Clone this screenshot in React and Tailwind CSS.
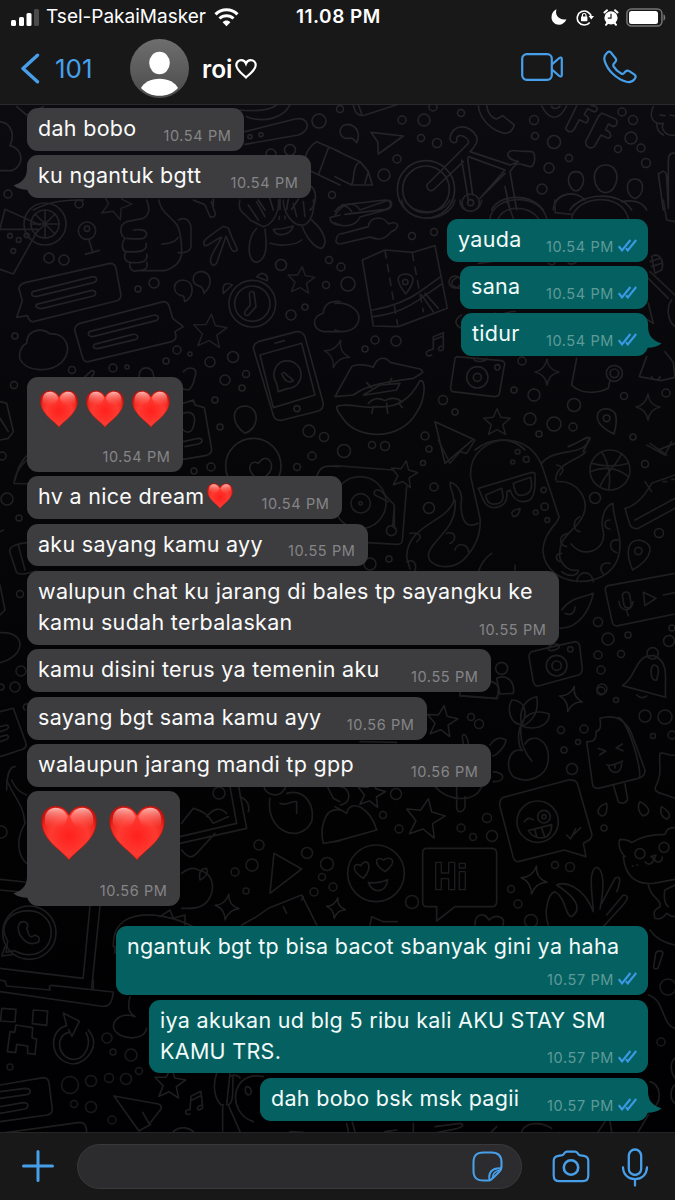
import React from "react";

const FONT = "font-['Inter','Liberation_Sans',sans-serif]";

/* ---------- wallpaper ---------- */

const DOTS = [
  // x, y, r in page pixels
  [319, 121, 7], [271, 154, 5], [290, 150, 5.5], [8, 194, 4], [79, 204, 4], [332, 195, 3.5],
  [340, 109, 3.5], [402, 120, 4], [424, 120, 6], [433, 107, 4], [461, 113, 3.5], [421, 138, 3.5], [437, 143, 4.5], [397, 159, 4], [384, 175, 6],
  [534, 120, 4.5], [535, 136, 3.5], [554, 142, 6.5], [569, 158, 3.5], [549, 168, 5], [542, 189, 5], [622, 112, 4], [633, 120, 4.5], [631, 138, 6], [618, 149, 3.5], [641, 148, 4], [646, 163, 4.5],
  [412, 236, 3.5], [434, 232, 3.5], [341, 267, 4], [348, 284, 7], [375, 340, 4], [365, 349, 3], [396, 341, 5], [455, 282, 6],
  [522, 361, 4], [514, 390, 3], [534, 395, 6], [443, 400, 4.5], [455, 412, 3], [530, 419, 6], [554, 424, 7], [573, 427, 4], [539, 434, 3], [574, 405, 6.5], [624, 396, 3.5], [666, 393, 4], [633, 437, 3],
  [344, 451, 6.5], [372, 445, 3.5], [385, 446, 4.5], [425, 436, 4], [429, 449, 3], [423, 463, 2.5], [434, 487, 4], [429, 508, 5.5], [645, 464, 3.5], [595, 498, 5.5], [659, 533, 4.5], [370, 564, 6], [389, 559, 3],
  [598, 622, 4.5], [608, 639, 6], [628, 635, 3], [598, 655, 4], [621, 654, 3.5], [601, 670, 4], [602, 689, 5], [669, 641, 5.5], [672, 628, 3],
  [49, 258, 5], [64, 260, 5], [138, 289, 3], [154, 283, 5], [281, 265, 5.5], [329, 260, 3.5], [326, 285, 3.5], [291, 315, 5], [305, 307, 3], [15, 336, 3], [72, 370, 3.5], [14, 385, 3.5], [113, 368, 4], [127, 367, 2], [177, 350, 4], [190, 354, 2], [166, 361, 3], [210, 362, 5], [233, 357, 5.5], [246, 374, 3.5], [225, 380, 5], [242, 388, 3], [215, 400, 3], [220, 427, 3], [309, 431, 6], [324, 437, 4.5], [312, 456, 4], [297, 467, 3.5], [194, 471, 3], [211, 467, 4], [2, 456, 4],
  [7, 499, 6], [19, 518, 3], [20, 594, 3.5], [21, 671, 5], [15, 687, 5], [1, 687, 3], [219, 793, 6], [1, 832, 6],
  [471, 717, 3.5], [479, 724, 4.5], [561, 730, 3.5], [584, 729, 4], [578, 742, 2.5], [564, 750, 3], [572, 769, 5.5], [645, 716, 6], [665, 717, 7], [653, 736, 2.5], [672, 735, 4], [616, 700, 2.5], [601, 691, 4], [604, 828, 3],
  [396, 794, 5.5], [383, 815, 3.5], [399, 829, 4], [487, 818, 4.5], [461, 828, 4], [473, 837, 3.5], [492, 836, 5.5], [555, 865, 3.5], [570, 867, 4.5], [511, 889, 3.5], [518, 904, 4], [412, 902, 6.5], [531, 921, 6.5],
  [259, 845, 5], [252, 865, 6], [235, 872, 4], [246, 891, 3], [307, 853, 5.5], [327, 864, 6.5], [322, 877, 3.5], [333, 887, 4], [314, 892, 4],
  [107, 1038, 5], [113, 1052, 3], [131, 1055, 6], [139, 1071, 3.5], [109, 1078, 4.5], [126, 1079, 5.5], [91, 1081, 5.5], [70, 1085, 8.5], [74, 1104, 3.5], [91, 1107, 5.5], [112, 1120, 4], [10, 1067, 3],
  [661, 1042, 4], [668, 987, 8],
];

function Star({ x, y, s = 1, r = 0 }) {
  return (
    <path
      vectorEffect="non-scaling-stroke"
      transform={`translate(${x} ${y}) rotate(${r}) scale(${s})`}
      d="M0-14 4-5 14-4 6 3 9 13 0 8-9 13-6 3-14-4-4-5Z"
    />
  );
}
function Spark({ x, y, s = 1, r = 0 }) {
  return (
    <path
      vectorEffect="non-scaling-stroke"
      transform={`translate(${x} ${y}) rotate(${r}) scale(${s})`}
      d="M0-13Q1-2 12 0 2 2 0 13-2 2-12 0-2-2 0-13Z"
    />
  );
}

function Wallpaper() {
  return (
    <svg className="absolute inset-0 h-full w-full" viewBox="0 0 675 1200" fill="none" aria-hidden="true">
      <defs>
        <linearGradient id="wp" x1="0" y1="0" x2="0" y2="1">
          <stop offset="0" stopColor="#0d0d12" />
          <stop offset=".35" stopColor="#07070a" />
          <stop offset=".7" stopColor="#020203" />
          <stop offset="1" stopColor="#000002" />
        </linearGradient>
        <linearGradient id="ln" gradientUnits="userSpaceOnUse" x1="0" y1="100" x2="0" y2="1140">
          <stop offset="0" stopColor="#262628" />
          <stop offset="1" stopColor="#18181a" />
        </linearGradient>
      </defs>
      <rect width="675" height="1200" fill="url(#wp)" />
      <g stroke="url(#ln)" strokeWidth="1.5" strokeLinejoin="round" strokeLinecap="round">
        {DOTS.map(([x, y, r], i) => (
          <circle key={i} cx={x} cy={y} r={r} />
        ))}
      </g>
      <g stroke="#202022" strokeWidth="1.500" strokeLinejoin="round">
        <Star x={301} y={280} s={0.95} r={5} />
        <Star x={210} y={331} s={1.2} r={5} />
        <Star x={497} y={422} s={0.95} />
        <Star x={404} y={474} s={0.95} r={10} />
        <Star x={442} y={721} s={1.1} r={8} />
        <Star x={425} y={818} s={1.4} r={10} />
        <Star x={371} y={793} s={1} r={10} />
        <Star x={170} y={1083} s={1.1} r={5} />
        <Star x={116} y={203} s={1.1} r={20} />
        <Spark x={547} y={372} />
        <Spark x={648} y={407} />
        <Spark x={337} y={354} s={1.1} r={15} />
        <Spark x={571} y={699} r={15} />
        <Spark x={534} y={880} s={1.1} r={10} />
        <Spark x={227} y={907} r={8} />
        <Spark x={336} y={908} s={0.8} r={10} />
      </g>
      <g stroke="#252527" strokeWidth="5" strokeLinejoin="round" strokeLinecap="round">
        {/* top left */}
        <g transform="scale(.3333)">
          <path d="M0 365c35 5 45 40 30 72 40 8 45 60 5 75H0M50 320l30 25 50-25M740 350c50 20 110 5 130-35M720 330c50 5 90 0 110-15M735 395l150-38c45-8 50 35 10 48l-160 28" />
          <path d="M950 425 1020 455M950 425c-30 20-45 55-25 85l95 45M985 445l-30 80M250 600c-40 0-95 0-150 30" />
          <circle cx="750" cy="410" r="6" /><circle cx="783" cy="404" r="6" />
          <path d="M640 598l0 20M935 560c20 20 10 60-5 70M775 600l20 30M810 596l10 34M840 598v30M865 598l-5 30M895 598l-20 30" />
        </g>
        {/* top right: pencil, plane, bicycle, phone, OFF, people */}
        <g transform="translate(335 0) scale(.3333)">
          <path d="M55 315c5 25 15 35 35 30l110-35M70 315l10 25M0 450l75 35 25 30 12 40-62 0-50-25M75 485c-25 15-15 50-25 70M100 515l-10 35M40 415c-30 5-35-40-3-42 30 2 40 30 28 55-10-10-10-15-25-13Z" />
          <path d="M108 397 205 408 130 462 128 425Z" />
          <circle cx="273" cy="568" r="86" /><circle cx="273" cy="568" r="70" />
          <path d="M275 555 400 430c5-15-30-35-35-15 5 20-20 15-20 0 5-45 60-45 80-5 5 12 0 25-20 45l120 40 25-10c-45-10-40-40 0-32l40 2c12 2 12 35 0 45-20 0-35-15-50-5l-15 20 20 115M380 480l20 120M400 470l110 40-75 85M398 475l15 110M275 555c0 15 10 20 20 15l90-85M510 560l15 70M440 590l70-70" />
          <circle cx="407" cy="608" r="26" /><circle cx="407" cy="608" r="9" />
          <path d="M470 630c20-45 110-55 155 0" />
          <path d="M430 318c5 40 40 75 80 82 20 0 25-15 28-25l-35-28c-10 5-15 10-20 10-15-5-25-20-28-40" />
          <path d="M620 318c20 40 50 50 75 0M650 318c0 10 20 10 25 0" />
          <path d="M725 318 692 385c8 15 20 12 26 2l15-28 20 10c12-10 8-20-5-25l10-18 20 10c15-5 10-20-10-20" />
          <path d="M790 350 752 425c0 18 20 25 28 12l18-32 22 10c12-5 8-20-8-25l8-18 15 8c15-5 15-22 0-26l-35-15Z" />
          <path d="M955 320c-15 30 0 55 30 50-10 20 10 40 35 35M965 370c0 20 10 30 20 35M975 345l15 2M1005 345l15 3" />
          <path d="M723 515c-35 0-25 55 0 58 25-3 35-58 0-58ZM812 495c-50 0-40 80 0 83 40-3 50-83 0-83ZM900 537c-35 0-25 55 0 58 25-3 35-58 0-58Z" />
          <path d="M655 630c5-55 70-60 95-30M705 630c30-50 150-60 185 0M860 605c40-8 65 5 75 25M1020 460c-20-5-20 15-20 30v130M975 520c10-12 20-5 20 10l5 95M970 520l15 110M20 615l130-15c25 0 20 25 0 28l-120 15M0 635c20-30 40-15 50 0" />
        </g>
        {/* right, upper middle: sliders, map, lips, camera, mug, bell */}
        <g transform="translate(335 200) scale(.3333)" stroke="#222224">
          <path d="M0 45c25-40 60-40 75-15l80-28c20-5 20 20 0 27l-80 22C60 85 15 80 0 68M5 115c0-10 10-15 20-15l75-20c5-35 50-30 60-8 25-10 40 5 15 20-15 5-15 25-45 25-15 0-20-8-30-5l-85 20c-10 0-15-8-10-17Z" />
          <path d="M200 0c10 70 140 75 160 0M210 0c20 45 110 50 135 0M375 0c0 45 60 45 65 0M465 55c10-70 150-80 170 0M490 55c20-40 90-40 120 0M515 0l20 55M660 0c-5 20 5 30 0 38l50 5M710 55c15-70 150-80 170 0M985 0l10 60 25 5" />
          <path d="M82 180 150 150 235 157 300 137 337 325 190 380 115 378ZM112 330c60-10 110-30 150-60l55-40M115 350c70-10 110-30 150-60l55-38M260 285l35 50M270 280l40 45" /><path strokeDasharray="22 20" d="M150 152 188 375M232 160 265 335" />
          <path d="M212 282c-30-40-30-58 0-60 30 2 28 25 0 60Z" /><circle cx="211" cy="246" r="8" />
          <path d="M0 310c45-5 80 25 70 55-10 30-50 35-70 25M290 465c-15 10-25-10-5-15l10-3V410l30-12v50c-15 12-22-5-5-10M295 420l30-12" />
          <path d="M0 590 50 500c15-10 50-5 65 2 10-30 35-35 50-15l90 20c15 10 10 10-20 28-80 10-140 20-180 50ZM5 620c30-15 90 10 120 0 60 5 100-20 130-78 20-5 15 60-10 95-50 90-180 80-220 20-15-20-20-25-20-37Z" />
          <path d="M85 585l50-30 60-5-10 20-95 15ZM100 610c20-20 35-15 50-8 15-10 40-10 50 5M115 620l-5 20M155 610l3 30M190 608l12 15M95 548l15 15M170 535l-8 15" />
          <path d="M365 470 500 482c8 2 12 10 8 15l-15 85c-3 8-10 8-15 8l-125-15c-8-5-8-10-5-20l12-80Z" /><circle cx="427" cy="532" r="32" /><circle cx="427" cy="532" r="12" /><circle cx="487" cy="502" r="8" />
          <path d="M415 475c5 15 40 10 40 0M725 475 710 555c30 30 80 25 110 10l5-25" /><circle cx="838" cy="520" r="24" /><circle cx="838" cy="520" r="13" />
          <path d="M935 470l-22 60 65 12 42-10-5-45-25-32M950 530c5 15 25 10 25 0M430 190l40-5M640 190c15 10 20 0 20-5M700 190c10 5 20 0 25-5M370 230c-30 15-25 30 5 35M380 345c-20 10-25 30 0 40M480 340c20 10 50-10 60-5M950 170c20-15 40 10 30 40l-20 10ZM945 185l30-10M950 200l30-10M945 215l75 70M940 235l60 60M1010 300c-15 20-15 60 10 80M940 310l5 20 10 40-25-15" />
          <path d="M787 650c0-30 45-30 55-5 5 20 0 40-5 57-30-15-50-30-50-52Z" /><circle cx="815" cy="655" r="10" />
          <path d="M300 665 415 718 330 790ZM420 750c50-40 110-40 150 0M700 740c40-15 55-35 65-25-5 15-15 25-20 40M1020 730l-50 20" />
        </g>
        {/* left, upper middle: drink, thumb, monkey, chat boxes, clock, phone */}
        <g transform="translate(0 200) scale(.3333)" stroke="#222224">
          <path d="M0 85 15 28 120 75M0 88h115L40 222 0 208" /><circle cx="135" cy="72" r="63" /><circle cx="135" cy="72" r="42" />
          <path d="M135 30v84M93 72h84M105 42l60 60M165 42l-60 60" /><circle cx="30" cy="107" r="7" /><circle cx="56" cy="120" r="7" /><circle cx="80" cy="106" r="7" /><circle cx="40" cy="153" r="7" />
          <circle cx="261" cy="92" r="26" /><circle cx="261" cy="86" r="8" /><path d="M267 120l12 38M256 163l42-12" />
          <path d="M440 0c15 35 0 50-10 55l-50 10c-25 10-20 40-5 50-12 15-10 35 3 42-10 15 0 30 12 30-5 20 10 30 20 25h85c20-5 45-20 50-50 0-45-5-80-20-95-30-30-45-40-48-67M380 115c50 5 60 0 60-15-5-12-20-12-40-10M378 155c50 3 65-5 60-25M390 187c40 5 55-5 50-25M410 212c30 0 35-10 30-25M485 132c20 0 40-5 50-20M535 60c25-12 35 5 38 20v60c-2 15-20 20-38 18" />
          <path d="M580 0c20 10 30 10 35 15l15 35c15 5 20-5 12-20l-8-25M635 192c-10-15 0-25 30-80-20 5-35 25-50 25-12-12 0-20 55-58l15 5c20 60 40 70 15 70-12-10-15-35-22-45l-28 80c-5 10-12 8-15 3Z" />
          <path d="M720 0c-10 40 20 40 30 60l40 20c30-5 50-50 45-80M745 15l30 45M770 5l25 45M850 0c0 40 30 80 60 75 25-5 35-50 30-75M880 10l10 40M910 5l5 45M770 85c-30 30-30 100 0 102 35-10 30-60 25-100M905 75c15 40 40 70 60 70 20-15 10-50-30-85M810 130c30 10 80 5 95-10M820 88c10 25 50 20 60-10-15 5-40 10-60 10ZM838 50v8M855 48v8M1020 45l-30 8c0 15 20 25 30 20" />
          <path d="M75 248 330 190c12 0 15 5 18 15l15 80c0 10-5 15-15 18L100 365c-8 2-15-10-18-18l-32 5 17-50-10-35c0-10 5-15 18-19ZM98 275l180-45c15 0 15 12 5 17l-175 43c-15 0-15-10-10-15ZM110 313l165-42c15 0 15 12 5 17l-155 38c-15 0-20-8-15-13Z" />
          <path d="M240 370 490 305c10 0 15 5 18 15l10 35 32 25-25 15c5 15 5 25-10 30L265 485c-10 2-15-5-18-15l-23-80c0-10 5-15 16-20ZM268 395l195-50c15 0 15 12 5 17l-190 48c-15 0-15-10-10-15ZM283 433l115-30c15-2 20 10 10 15l-115 28c-15 0-15-8-10-13Z" />
          <path d="M555 305c-5-12 0-10-5-17-35-5-35-45-3-48 35 0 40 45 8 65ZM612 280c0-15-5-15-10-20-35-10-25-45 3-46 30 5 35 40 7 66Z" />
          <circle cx="757" cy="311" r="70" /><circle cx="757" cy="311" r="53" /><path d="M748 280c5-8 15-8 15 5l5 35-22 25c-10 5-15-5-10-12l15-18ZM670 280c-5-35 15-32 27-25ZM770 230c15-18 35-8 32 12Z" />
          <path d="M80 430c0-40 45-50 70-28 50-5 70 50 35 85-40 35-110 25-125-10-5-20 5-40 20-47ZM255 530l20-18c10 0 10 10 0 17M418 530c-5-35 45-35 43 0M550 515c20-20 45-10 35 15-5 25-10 35-20 40l-25-5M1020 305c-35-5-50 15-50 35-35 10-35 45 0 55h50" />
          <path d="M775 425 890 395c15-2 20 5 25 15l55 200c0 15-5 20-15 23l-110 28c-15 2-22-5-25-15L760 445c0-10 5-15 15-20ZM780 465l125-35 40 155-125 38ZM825 430l28-8" /><circle cx="891" cy="626" r="9" /><path d="M835 575l-5-25c-20-30 0-68 32-68 55 5 55 80 0 84ZM845 520c10 25 20 30 35 22l-10-10c-10 0-10-15-20-15" />
          <path d="M735 618c-40 0-45 50 0 82 45-15 45-80 0-82ZM550 610l30-10 5 15 28 8 22 125c0 10-5 15-15 18l-70 12M550 640c30-10 40 10 30 40-5 20-20 20-30 10M550 725l45-10c15 0 15 12 0 17l-40 8M0 605l20 5 20 85-15 20-25 5M0 655l25 40" />
          <circle cx="760" cy="798" r="83" /><path d="M780 840c-45-20-35-65-5-50 25-35 50 0 35 25-5 10-20 20-30 25ZM45 840l10-35c10-20 20-35 30-40M950 830c10-30 20-35 70-30" />
        </g>
        {/* right middle: record player, octopus, ball, trainer, voice note, camera, bell */}
        <g transform="translate(335 440) scale(.3333)" stroke="#1e1e21">
          <path d="M0 77 175 90M215 140 202 300c0 10-5 13-15 13l-90-5" /><circle cx="75" cy="188" r="78" /><circle cx="77" cy="190" r="29" /><circle cx="77" cy="190" r="5" />
          <path d="M160 185 120 165c-10-15 10-20 20-10l38 40-5 65M178 195v70" /><circle cx="169" cy="272" r="15" />
          <path d="M310 0 345 70 375 35 395 40 420 0M435 235 407 110c-5-70 50-110 110-110 60 5 90 40 105 80l50 150c0 20-48 45-48 105 10 110 190 120 225 20 20-60-15-110-15-165-20 5-40 40-30 80 15 60-60 90-95 42M430 250c-50 25-55-40-50-75 0-20-15-45-35-48 0 30 15 30 10 60-25 60-140 70-140 165l10 35M435 235c5 60-25 100-50 125-40 35-105 20-105-15 5-45 90-75 80-165M620 70c40-50 130-20 140-70M662 120c0-50 70-60 90-85M665 125c60-5 100 50 80 100-20 50-80 60-70 130 10 25 30 40 50 35" />
          <path d="M430 145 590 97 600 100c2 40 0 75-20 82-30 10-45-5-55-32l-10 5c5 30-10 45-35 48-35 0-35-30-50-58ZM452 165c5 30 20 30 40 25 20-10 10-30 8-45ZM535 130c5 40 20 40 40 32 20-10 15-35 12-50Z" />
          <circle cx="548" cy="35" r="7" /><circle cx="574" cy="58" r="9" /><circle cx="533" cy="66" r="6" /><circle cx="626" cy="150" r="8" /><circle cx="629" cy="200" r="11" /><circle cx="602" cy="217" r="7" /><circle cx="637" cy="240" r="7" />
          <path d="M530 220c5-15 20-10 25-15 0 15-10 25-20 25ZM335 280c30-10 30 25 10 30M360 330c5-25 40-20 42 10M225 280c30-5 40 10 20 25M215 365c25-10 30 10 25 28M735 230c-25 10-20 45 0 45M700 280c-30 5-30 35-5 40M680 340c-20 0-20 20-5 25M850 300c-30-5-30 30-5 38M825 370c-25-5-35 15-20 32M775 425c-5-35-45-35-50 0M825 240c-20 0-20 25 0 27M665 75c20 5 25 15 10 30M430 395c10-30 25-45 40-55M540 395v-20M680 395c25 20 50 10 50-5M680 510c30-40 60-35 95-50-10 45-40 105-100 105M690 520c20 10 30-5 30-20" />
          <circle cx="825" cy="90" r="60" /><path d="M770 70c40 10 80 10 110 0M765 95c40-15 80-15 115 15M800 35c20 30 30 80 20 115M860 40c-10 30-50 60-65 100" />
          <path d="M935 15l55 30 20-40M945 10l50 35M870 205c20-5 50-20 80-75l70-25M870 205l15 50c5 10 15 12 25 10l110-60M900 240l120-65M930 125l20 30M985 125h10M1010 118h8" />
          <path d="M893 390c-20-45-20-90 20-90 50 10 40 55-20 90Z" /><circle cx="910" cy="333" r="11" />
          <path d="M1020 400 820 437c-8 2-10 10-8 18l20 92c2 8 10 12 18 10l170-35M925 457l38 18-33 22ZM985 465l35-7M862 465c5-12 20-12 22 0l5 30c-2 12-18 12-22 0ZM852 485c5 35 40 30 42 0M875 512l5 15" />
          <path d="M590 635 720 605c8 0 12 5 14 12l8 70c0 10-3 15-12 18L610 738c-8 2-12-5-15-12l-13-75c0-8 3-13 8-16ZM640 628c-5-15 30-22 33-10 0 12-30 18-33 10Z" /><circle cx="665" cy="677" r="31" /><circle cx="665" cy="677" r="14" /><circle cx="706" cy="628" r="8" />
          <path d="M862 737c45-25 35-95 95-90 50 20 30 80 35 125ZM955 675c15 0 20 10 10 45-20 5-20-35-10-45ZM905 765c15 15 25 5 30 3" /><circle cx="953" cy="640" r="17" />
          <circle cx="500" cy="685" r="18" /><path d="M485 715c35-15 55 15 50 45l-40 2ZM470 725c30 10 20 35 15 50l-110-8" />
        </g>
        {/* left edge */}
        <g transform="translate(0 460) scale(.3333)" stroke="#1e1e21">
          <path d="M42 70c50 5 110-5 150-20M42 70C45 30 70 10 80 0M80 248c-40 5-55 15-50 30l20 60c10 8 30 3 60-5M55 255l20 75M0 375l15 75-15 15M0 518c80-5 80 70 0 90M0 755l40-10 38 105c2 10-3 15-10 18L0 890M0 800l20-5c10 5 5 12-5 15l-15 5M0 830l20-5c10 5 5 12-5 15l-15 5M45 920c-20 0-25 40-25 70M90 735c-20-10-25 10-15 15M0 215l10-5" />
        </g>
        {/* lower left: picture, apple, laptop */}
        <g transform="translate(0 780) scale(.3333)" stroke="#1d1d1f">
          <path d="M20 0c20 50 50 70 55 130-30 50-20 100 5 120M35 0c10 25 30 40 45 45M0 298l75 8M0 330l80 8M300 378 275 625M270 378 250 590M0 565l250 30M0 600l15 3 5 15 130 12M150 630c-3-12-3-12 5-14l185 20" />
          <circle cx="88" cy="458" r="80" /><path d="M88 392c90 5 85 130 0 132-20 0-30-5-45-12l-25 5 5-35c-30-45 5-90 65-90ZM70 425c-15 0-20 20-10 40 15 25 35 30 55 22 5-12 5-15-10-22-12 10-15 5-20-5l-5-15c10-15-5-20-10-20ZM15 500l-10 28 35-5" />
          <path d="M540 170 710 130 690 20M540 190 740 145 715 15M545 130l35-45c50 15 50 35 60 45l45-20M620 110c20-25 40-30 60-10M545 210c20 25 30 25 45 10l55-60M720 50c25 10 30 30 25 45" />
          <path d="M545 280c20-15 35-20 50-10 50 10 50 60 30 90-20 30-60 25-80 25M600 300c-5-25 5-35 20-35 5 15 0 25-20 35Z" />
          <path d="M800 0c-30 40 40 60 50 30 10 0 5-20-5-25M810 55c-15 100 90 140 125 70 10-50-20-100-75-85M840 70c20 10 40-10 50-5v35M1020 90c-50-10-60 60-50 100l50-8M980 15l20 40 20 10M822 220 905 267 810 340ZM725 435l45-25 35-25 100-40 45 90M850 380l10 20M910 350l-5 10M340 500c-5-120 140-110 240-60M480 410l30-20 10 25 35-10v30M345 500v20" />
        </g>
        {/* lower right: plant, ice pop, speech boxes, cat, hand */}
        <g transform="translate(335 690) scale(.3333)" stroke="#1d1d1f">
          <path d="M530 30c40 0 50 40 30 75-35-5-45-45-30-75ZM605 20c10 50-20 80-45 88-10-50 10-80 45-88ZM643 72c0 40-50 50-85 35 10-35 45-50 85-35ZM558 108c-5 50 10 80 33 105M555 112c-10 35 0 65 8 70-45-15-55 60-25 80 40 20 100 0 102-55 5-60-50-80-70-45" />
          <path d="M795 85c50-15 85 10 100 60l35 95c0 15-5 20-20 25l-120 30c-8 0-15-3-17-10L755 155c20 0 30-5 28-30 15-5 15-15 12-40ZM850 83c30 5 75 170 62 180M835 285l15 50c8 8 25 5 28-8l-8-45M790 175l22 8-18 12M862 162l-18 12 20 8M815 225c15 5 30-5 48-12M820 225c5 30 40 30 40-5M838 222l3 12" />
          <path d="M800 378c-20-10-10-30 15-38 3 25-3 38-15 38ZM925 378c-20-15-15-35-10-43 30 15 35 35 10 43ZM995 388c-20-10-20-25-15-38 25 15 30 30 15 38ZM1020 195c-20 5-30-10-45-5-5 40 10 55-15 105 0 15 25 15 60 30" />
          <path d="M505 322 700 270c15-2 22 0 27 10l43 150c3 15-5 20-25 30l8 40-65-20L550 515c-10 0-12-5-15-12L495 350c-3-15 0-22 10-28Z" /><circle cx="608" cy="395" r="62" /><circle cx="627" cy="380" r="19" /><circle cx="627" cy="380" r="6" />
          <path d="M568 395c10-12 15-12 27-5M580 422l70-18c0 50-50 50-70 18ZM600 420l5 20M620 415l8 22M695 435l12 12 15-30M715 435l22-22" />
          <circle cx="123" cy="550" r="85" /><path d="M85 565c-40-25-30-50-8-38 20-30 40 5 8 38ZM150 545c-40-25-25-50-5-35 25-15 45 5 5 35ZM100 577c25 5 40 0 58-8-5 45-50 40-58 8Z" />
          <path d="M275 475h195c10 0 15 5 15 15v145c0 10-5 15-15 15H360l-55 43v-43h-30c-8 0-12-5-12-15V490c0-10 5-15 12-15Z" />
          <path strokeWidth="4" d="M302 517h17v32h22v-32h18v82h-18v-33h-22v33h-17ZM373 545h18v54h-18ZM373 520h18v14h-18Z" />
          <path d="M870 500c-20-20-20-45-15-52 15 0 30 5 35 10 30-20 60-25 100-25 5-20 20-20 30-20M865 500c5 50 30 85 90 80l65-12M940 585c10 45 40 40 35 65-20 10-20 20-15 35 15 5 30-5 35-15 12 10 25 10 25 10M1000 650c-10-5-15-30-10-50l30-15" /><circle cx="915" cy="491" r="15" /><circle cx="987" cy="472" r="15" /><path d="M948 500l15-5-5 12ZM930 515c10 15 25 5 27-8 8 15 25 10 25-5M892 528h3M905 525h3" />
          <path d="M640 705c-15-40 0-95 20-100 35 20 30 75 50 75 35-25 10-60-45-95 20-10 80 0 110 80M775 660c-5-60-15-120 10-128 20 5 25 50 10 125M800 640l40-75c25-15 10 30 5 40M815 675l50-60c25 0 5 25-10 40l-50 55M420 705c0-40 30-35 42-15 20-20 50-10 42 15M105 705l5-25 35 15 42 0" />
          <path d="M385 160c-10-40 10-30 15 0M465 165c20-30 40-20 48-15 0 15-25 45-40 48M475 245c40 5 35 30 0 30M300 290c40 45 120 50 140 0M365 290v60c0 20 20 20 25 0V320M0 350l35 20c10-45 70-20 90 50L0 455M15 290c30 0 40 50 0 55M75 155l110 2M375 0l0 18 112 8 3-25" />
        </g>
        {/* bottom left */}
        <g transform="translate(0 980) scale(.3333)" stroke="#1d1d1f">
          <path d="M0 35l300 43c25 5 35-5 40-40M280 0v28M5 85l43 3-3 38-43-3ZM100 90l43 3-3 43-43-5ZM48 135l50 8-2 30 14 5-5 45-22-3v-22l-33-5-3 25-25-3 8-60 14 2ZM265 150c40 45-5 100-45 102-70-5-80-100-20-115l-10-38 48 25-22 45-10-20M258 158c20 35-5 80-35 80-50 0-60-70-18-80" />
          <path d="M0 315 130 293c10 0 15 5 17 15l10 80c0 10-5 15-15 17L0 425M0 335l75-10c20 0 20 15 5 19L0 355M0 380l70-12c20 0 15 15 5 19L0 400M0 460l240-33c15 0 20 10 20 30M390 50c-10 40 0 50 15 60-50-20-90 30-45 55 30 15 75 10 80-20" />
          <path d="M342 348 475 372c10 3 10 8 8 15l-35 45-20-35M342 348l75 105 35-20M570 402c-20 5-15-15 0-13l3-40 30-15 5 50c-20 15-20-5-5-8M572 362l30-15M650 280c-20 60 10 100 20 95M690 280l-10 95M700 285c-5 40 5 80-15 90l35 80M668 378v75M790 290c-100-20-110 110-30 135M740 320c15 0 20 25 5 25-12-5-10-25-5-25ZM520 455c20-20 50-10 60 0M870 455l40 2M690 290c15-10 30 0 30 5" />
        </g>
        {/* bottom right */}
        <g transform="translate(335 980) scale(.3333)" stroke="#1d1d1f">
          <path d="M940 45c50 15 40 90 80 100M1020 235c-15 10-15 40 0 60M1020 370c-20-15-10-50 0-55M945 305c35 10 35 60 10 80M40 455l-5-25M60 455l-8-28M150 455l35-5M235 430v25M300 440l75-10c20 5 0 15-20 18l-50 10M560 455c10-30 60-30 90-10M790 455l20-30M830 455l-5-30M910 455l30-50M470 455l15-15M962-80c5-10 20-10 22 0l-15 45c-12 3-15 0-12-10ZM945-150c20 30 50 40 75 45" />
        </g>
      </g>
    </svg>
  );
}

/* ---------- icons ---------- */

function Heart({ className }) {
  return (
    <svg className={className} viewBox="0 0 38 38" role="img" aria-label="❤️">
      <defs>
        <radialGradient id="hg" gradientUnits="userSpaceOnUse" cx="19" cy="21" r="21">
          <stop offset="0" stopColor="#ff201c" />
          <stop offset=".6" stopColor="#fd3a31" />
          <stop offset=".85" stopColor="#f0281f" />
          <stop offset="1" stopColor="#cf140f" />
        </radialGradient>
        <linearGradient id="hs" x1="0" y1="0" x2="0" y2="1">
          <stop offset="0" stopColor="#ffc9c2" stopOpacity=".9" />
          <stop offset="1" stopColor="#ff6055" stopOpacity="0" />
        </linearGradient>
      </defs>
      <path
        d="M19 37.500C15.500 31.500 1 25 .4 11.500 .2 5 4.500 .8 10 .8c4 0 7 2.200 9 6 2-3.800 5-6 9-6 5.500 0 9.800 4.200 9.600 10.700C37 25 22.500 31.500 19 37.500Z"
        fill="url(#hg)" stroke="#a51812" strokeWidth=".5"
      />
      <path d="M2.500 12C2 5 5.500 1.800 10 1.800c4 0 6.500 2.500 8 6-1 5-4 8-8 8-4 0-7-1.300-7.500-3.800Z" fill="url(#hs)" />
      <path d="M35.500 12C36 5 32.500 1.800 28 1.800c-4 0-6.500 2.500-8 6 1 5 4 8 8 8 4 0 7-1.300 7.500-3.800Z" fill="url(#hs)" />
    </svg>
  );
}

function Ticks() {
  return (
    <svg className="mb-[2px] ml-1 h-[13px] w-[19px] shrink-0" viewBox="0 0 19 13" fill="none" stroke="#3b99e6" strokeWidth="2.100">
      <path d="M.8 7.200 4 11.400 12.400 1M8 9.300 9.800 11.400 18.200 1" />
    </svg>
  );
}

function StatusBar() {
  return (
    <div className="grid h-[34px] grid-cols-[1fr_auto_1fr] items-center pl-[11px] pr-[9px] text-white">
      <div className="flex items-center">
        <svg className="h-[17px] w-[28px]" viewBox="0 0 28 17">
          <rect x="0" y="11" width="5" height="6" rx="1.500" fill="#fff" />
          <rect x="8" y="8" width="5" height="9" rx="1.500" fill="#fff" />
          <rect x="15.500" y="4" width="5" height="13" rx="1.500" fill="#fff" />
          <rect x="23" y="0" width="5" height="17" rx="1.500" fill="#4a4a4b" />
        </svg>
        <span className="ml-[7px] w-[161px] whitespace-nowrap text-[19px] leading-6">Tsel-PakaiMasker</span>
        <svg className="ml-[7px] h-[19px] w-[25px]" viewBox="0 0 25 19" fill="none" stroke="#fff">
          <path d="M1.500 6.300C7.800.2 17.200.2 23.500 6.300" strokeWidth="3.200" />
          <path d="M5.500 10.500c4-3.800 10-3.800 14 0" strokeWidth="3" />
          <path d="m12.500 18.200-3.900-4c2-2.200 5.800-2.200 7.800 0Z" fill="#fff" stroke="none" />
        </svg>
      </div>
      <span className="w-[85px] whitespace-nowrap text-[19px] font-semibold leading-6 tracking-[0.5px]">11.08 PM</span>
      <div className="flex items-center justify-end">
        <svg className="h-4 w-4" viewBox="0 0 16 16" fill="#fff">
          <path d="M5.500.3c-2 6 2.500 11.200 10 9.900C13.800 13.800 11 15.700 8 15.700 3.800 15.700.5 12.400.5 8.200.5 4.600 2.500 1.500 5.500.3Z" />
        </svg>
        <svg className="ml-[9px] h-[17px] w-[18px]" viewBox="0 0 18 17" fill="none" stroke="#fff" strokeWidth="1.600">
          <path d="M13.700 13.500A7 7 0 1 1 15.200 8" />
          <path d="m12.600 7 2.700 3.600L18 7Z" fill="#fff" stroke="none" />
          <rect x="5" y="7.500" width="6.400" height="4.700" rx=".6" fill="#fff" stroke="none" />
          <path d="M6.400 8V6.300a1.800 1.800 0 0 1 3.600 0V8" strokeWidth="1.200" />
        </svg>
        <svg className="ml-[9px] h-[17px] w-[16px]" viewBox="0 0 16 17">
          <g stroke="#fff" strokeWidth="2" strokeLinecap="round">
            <path d="M1.500 3.500 4 1.300M14.500 3.500 12 1.300M3 15.800l1.500-2M13 15.800l-1.500-2" />
          </g>
          <circle cx="8" cy="8.800" r="6.600" fill="#fff" />
          <path d="M8 4.800v4.300H4.800" fill="none" stroke="#181818" strokeWidth="1.200" />
        </svg>
        <svg className="ml-[7px] h-[19px] w-[40px]" viewBox="0 0 40 19">
          <rect x=".9" y=".9" width="35" height="17.200" rx="4.500" fill="none" stroke="#747475" strokeWidth="1.500" />
          <rect x="3" y="3" width="29" height="13" rx="2.500" fill="#fff" />
          <path d="M37.500 6.200c2.400 1 2.400 5.600 0 6.600Z" fill="#747475" />
        </svg>
      </div>
    </div>
  );
}

function Header() {
  return (
    <header className="relative h-[105px] border-b border-[#2a2a2c] bg-[#181818]">
      <StatusBar />
      <div className="flex h-[69px] items-center pl-[21px] pr-[38px]">
        <svg className="h-[31px] w-[19px]" viewBox="0 0 19 31" fill="none" stroke="#479fea" strokeWidth="3.400" strokeLinecap="round" strokeLinejoin="round">
          <path d="M16.500 2.200 2 15.500l14.500 13.300" />
        </svg>
        <span className="ml-[15px] w-[41px] whitespace-nowrap text-[26px] leading-8 text-[#479fea]">101</span>
        <svg className="ml-[34px] h-[59px] w-[59px]" viewBox="0 0 59 59">
          <defs>
            <linearGradient id="av" x1="0" y1="0" x2="0" y2="1">
              <stop offset="0" stopColor="#6e6e6f" />
              <stop offset="1" stopColor="#4b4b4c" />
            </linearGradient>
          </defs>
          <circle cx="29.500" cy="29.500" r="29.500" fill="url(#av)" />
          <ellipse cx="29.500" cy="24" rx="10.300" ry="11.300" fill="#fff" />
          <path d="M11 49c3-5.500 9.500-9.300 18.500-9.300S45 43.500 48 49c-4.500 5-11 7.800-18.500 7.800S15.500 54 11 49Z" fill="#fff" />
        </svg>
        <h1 className="ml-[13px] flex items-center text-[24.500px] font-semibold leading-8 text-white">
          roi
          <svg className="ml-[2px] h-[20px] w-[22px]" viewBox="0 0 22 20" fill="none" stroke="#fff" strokeWidth="2.200" role="img" aria-label="♡">
            <path d="M11 18.500C8 15.500 1.300 11 1.300 6.300 1.300 3.300 3.500 1.200 6.200 1.200c2.200 0 4 1.300 4.800 3.400.8-2.100 2.600-3.400 4.800-3.400 2.700 0 4.900 2.100 4.900 5.100 0 4.700-6.700 9.200-9.700 12.200Z" />
          </svg>
        </h1>
        <svg className="ml-auto mt-[-3px] h-[28px] w-[42px]" viewBox="0 0 42 28" fill="none" stroke="#479fea" strokeWidth="2.200" strokeLinejoin="round">
          <rect x="1.200" y="1.200" width="29.600" height="25.600" rx="4.500" />
          <path d="m31 11.300 7.300-6.300c1.300-1 2.500-.4 2.500 1v16c0 1.400-1.200 2-2.500 1L31 16.700" />
        </svg>
        <svg className="ml-[40px] mt-[-3px] h-[34px] w-[34px]" viewBox="0 0 34 34" fill="none" stroke="#479fea" strokeWidth="2.200" strokeLinejoin="round">
          <path d="M3.600 3.200C5 1.600 6.600 1 7.800 2.400l4.700 5.900c1 1.300.8 2.600-.3 3.800l-1.400 1.700c-.8 1-.7 1.700-.1 2.800 1.800 3 4.500 5.200 7.500 6.900 1.100.6 1.900.5 2.700-.3l1.500-1.600c1.200-1.200 2.600-1.400 3.900-.4l5.200 3.500c1.600 1.200 1.300 2.700.2 4.200-2 2.800-5 3.800-8.300 2.900C13 28.800 4.700 20.300 1.800 11.300.7 8 1.400 5.300 3.600 3.200Z" />
        </svg>
      </div>
    </header>
  );
}

/* ---------- messages ---------- */

function Bubble({ out, tail, time, lines, size, children }) {
  return (
    <div
      className={`relative shrink-0 rounded-[11px] pl-[11px] ${size} ${
        out ? "self-end bg-[#056161] text-[#f2fbfa]" : "self-start bg-[#3d3d3f] text-[#fafafa]"
      }`}
    >
      {tail && (
        <svg
          className={`absolute bottom-[6px] h-[24px] w-[18px] ${out ? "right-[-14px]" : "left-[-14px] -scale-x-100"}`}
          viewBox="0 0 18 24"
          fill={out ? "#056161" : "#3d3d3f"}
        >
          <path d="M0 0h4c0 8 3 14 13.500 17.500-4 3-9 4.300-13.500 4.300L0 23Z" />
        </svg>
      )}
      {lines && (
        <div className="relative pt-[4.500px] text-[21.500px] leading-[31px] tracking-[0.3px]">
          {lines.map((l, i) => (
            <p key={i} className="flex items-center whitespace-nowrap">
              {l}
            </p>
          ))}
        </div>
      )}
      {children}
      <div
        className={`absolute bottom-[6.500px] flex items-center text-[14.500px] leading-[18px] tracking-[0.6px] ${
          out ? "right-[11px] text-[#5e9a98]" : "right-[12.500px] text-[#858587]"
        }`}
      >
        <span>{time}</span>
        {out && <Ticks />}
      </div>
    </div>
  );
}

function Messages() {
  return (
    <main className="relative flex h-[1027px] flex-col pl-[27px] pr-[27px] pt-[3px]">
      <Bubble time="10.54 PM" size="h-[43px] w-[217px]" lines={["dah bobo"]} />
      <Bubble tail time="10.54 PM" size="mt-[4px] h-[43px] w-[284px]" lines={["ku ngantuk bgtt"]} />
      <Bubble out time="10.54 PM" size="mt-[21px] h-[43px] w-[201px]" lines={["yauda"]} />
      <Bubble out time="10.54 PM" size="mt-[4px] h-[43px] w-[188px]" lines={["sana"]} />
      <Bubble out tail time="10.54 PM" size="mt-[4px] h-[43px] w-[187px]" lines={["tidur"]} />
      <Bubble time="10.54 PM" size="mt-[21px] h-[95px] w-[156px]">
        <div className="flex gap-[8px] pl-[2px] pt-[13px]">
          <Heart className="h-[38px] w-[38px]" />
          <Heart className="h-[38px] w-[38px]" />
          <Heart className="h-[38px] w-[38px]" />
        </div>
      </Bubble>
      <Bubble
        time="10.54 PM"
        size="mt-[4px] h-[43px] w-[315px]"
        lines={[
          <React.Fragment key="a">
            hv a nice dream
            <Heart className="ml-[3px] h-[26px] w-[26px]" />
          </React.Fragment>,
        ]}
      />
      <Bubble time="10.55 PM" size="mt-[5px] h-[42px] w-[341px]" lines={["aku sayang kamu ayy"]} />
      <Bubble
        time="10.55 PM"
        size="mt-[5px] h-[74px] w-[532px]"
        lines={["walupun chat ku jarang di bales tp sayangku ke", "kamu sudah terbalaskan"]}
      />
      <Bubble time="10.55 PM" size="mt-[4px] h-[43px] w-[464px]" lines={["kamu disini terus ya temenin aku"]} />
      <Bubble time="10.56 PM" size="mt-[5px] h-[43px] w-[400px]" lines={["sayang bgt sama kamu ayy"]} />
      <Bubble time="10.56 PM" size="mt-[4px] h-[43px] w-[464px]" lines={["walaupun jarang mandi tp gpp"]} />
      <Bubble tail time="10.56 PM" size="mt-[4px] h-[115px] w-[153px]">
        <div className="flex gap-[12px] pl-[3px] pt-[14px]">
          <Heart className="h-[56px] w-[56px]" />
          <Heart className="h-[56px] w-[56px]" />
        </div>
      </Bubble>
      <Bubble out time="10.57 PM" size="mt-[20px] h-[69px] w-[532px]" lines={["ngantuk bgt tp bisa bacot sbanyak gini ya haha"]} />
      <Bubble
        out
        time="10.57 PM"
        size="mt-[5px] h-[73px] w-[499px]"
        lines={["iya akukan ud blg 5 ribu kali AKU STAY SM", "KAMU TRS."]}
      />
      <Bubble out tail time="10.57 PM" size="mt-[5px] h-[43px] w-[388px]" lines={["dah bobo bsk msk pagii"]} />
    </main>
  );
}

function Composer() {
  return (
    <footer className="relative flex h-[68px] items-start border-t border-[#252526] bg-[#181818] pl-[22px] pt-[11px]">
      <svg className="mt-[6px] h-[32px] w-[32px]" viewBox="0 0 32 32" stroke="#479fea" strokeWidth="3" strokeLinecap="round">
        <path d="M16 1.500v29M1.500 16h29" />
      </svg>
      <div className="ml-[23px] flex h-[45px] w-[445px] items-center justify-end rounded-full border border-[#39393b] bg-[#2c2c2e] pr-[18px]">
        <svg className="h-[31px] w-[31px]" viewBox="0 0 31 31" fill="none" stroke="#479fea" strokeWidth="2.100" strokeLinejoin="round">
          <path d="M17 29.500h-5.500c-7 0-10-3-10-10v-8c0-7 3-10 10-10h8c7 0 10 3 10 10V16c0 2-1 3.500-2.500 5l-6 6c-1.500 1.500-2.500 2.500-4 2.500Z" />
          <path d="M17.500 29.300c-1.200-7.500 2-12.500 11.700-12" />
          <path d="M20.500 27.500c0-5 2-7.500 7.500-8.300" strokeWidth="1.600" />
        </svg>
      </div>
      <svg className="ml-[30px] mt-[6px] h-[33px] w-[38px]" viewBox="0 0 38 33" fill="none" stroke="#479fea" strokeWidth="2.200" strokeLinejoin="round">
        <path d="M1.700 11c0-3.500 1.500-4.800 4.500-5.200l3.300-.4c1-.1 1.600-.5 2.200-1.300l.9-1.300c.6-.8 1.300-1.200 2.400-1.200h8c1.100 0 1.800.4 2.400 1.200l.9 1.300c.6.8 1.200 1.200 2.200 1.300l3.300.4c3 .4 4.500 1.700 4.500 5.200v14.500c0 4-1.800 5.700-5.700 5.700H7.400c-3.900 0-5.700-1.700-5.700-5.700Z" />
        <circle cx="19" cy="17.500" r="7.200" strokeWidth="2.600" />
      </svg>
      <svg className="ml-[31px] mt-[4px] h-[39px] w-[28px]" viewBox="0 0 28 39" fill="none" stroke="#479fea" strokeWidth="2.300" strokeLinecap="round">
        <rect x="7.800" y="1.500" width="12.400" height="25.500" rx="6.200" />
        <path d="M2 19.500c.3 7 5.300 11.700 12 11.700s11.700-4.700 12-11.700M14 31.500v6" />
      </svg>
    </footer>
  );
}

export default function App() {
  return (
    <div className={`relative h-[1200px] w-[675px] overflow-hidden bg-black ${FONT}`}>
      <Wallpaper />
      <Header />
      <Messages />
      <Composer />
    </div>
  );
}
